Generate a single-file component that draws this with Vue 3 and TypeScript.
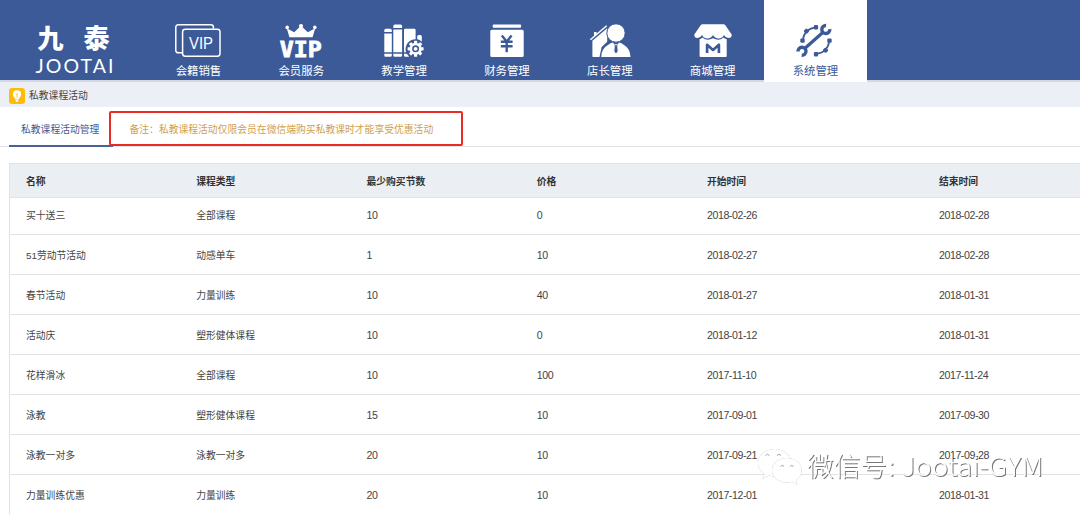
<script setup lang="ts">
interface NavItem {
  key: string
  label: string
}

interface Activity {
  name: string
  course: string
  minimum: number
  price: number
  start: string
  end: string
}

const navItems: NavItem[] = [
  { key: 'card', label: '会籍销售' },
  { key: 'member', label: '会员服务' },
  { key: 'teach', label: '教学管理' },
  { key: 'finance', label: '财务管理' },
  { key: 'manager', label: '店长管理' },
  { key: 'shop', label: '商城管理' },
  { key: 'system', label: '系统管理' },
]
const active = 'system'

const columns: string[] = ['名称', '课程类型', '最少购买节数', '价格', '开始时间', '结束时间']

const activities: Activity[] = [
  { name: '买十送三', course: '全部课程', minimum: 10, price: 0, start: '2018-02-26', end: '2018-02-28' },
  { name: '51劳动节活动', course: '动感单车', minimum: 1, price: 10, start: '2018-02-27', end: '2018-02-28' },
  { name: '春节活动', course: '力量训练', minimum: 10, price: 40, start: '2018-01-27', end: '2018-01-31' },
  { name: '活动庆', course: '塑形健体课程', minimum: 10, price: 0, start: '2018-01-12', end: '2018-01-31' },
  { name: '花样滑冰', course: '全部课程', minimum: 10, price: 100, start: '2017-11-10', end: '2017-11-24' },
  { name: '泳教', course: '塑形健体课程', minimum: 15, price: 10, start: '2017-09-01', end: '2017-09-30' },
  { name: '泳教一对多', course: '泳教一对多', minimum: 20, price: 10, start: '2017-09-21', end: '2017-09-28' },
  { name: '力量训练优惠', course: '力量训练', minimum: 20, price: 10, start: '2017-12-01', end: '2018-01-31' },
]

const teeth: number[] = [0, 45, 90, 135, 180, 225, 270, 315]
const systemTeeth: number[] = [-90, -45, 0, 90, 135, 180]
</script>

<template>
  <div class="page">
    <header class="header">
      <svg class="logo" viewBox="0 0 147 80">
        <text class="logo-cn" x="37.5" y="48" textLength="26" lengthAdjust="spacingAndGlyphs">九</text>
        <text class="logo-cn" x="83.5" y="48" textLength="26" lengthAdjust="spacingAndGlyphs">泰</text>
        <text class="logo-en" x="35.5" y="73" textLength="78">JOOTAI</text>
      </svg>
      <nav class="nav">
        <a v-for="item in navItems" :key="item.key" class="nav-item" :class="{ active: item.key === active }">
          <svg class="nav-icon" viewBox="0 0 48 36">
            <template v-if="item.key === 'card'">
              <path class="line" d="M8 30.8H4.2a2.4 2.4 0 0 1-2.4-2.4V5.2a2.4 2.4 0 0 1 2.4-2.4H37a2.4 2.4 0 0 1 2.4 2.4V6.5" />
              <rect class="line" x="8.6" y="7.2" width="37.4" height="27" rx="2.6" />
              <text class="vip-thin" x="15" y="26.6" textLength="24" lengthAdjust="spacingAndGlyphs">VIP</text>
            </template>
            <template v-else-if="item.key === 'member'">
              <path d="M12.4 15.2 9.8 6.2 17.2 10.2 24 3.8l6.8 6.4 7.4-4L35.6 15.2Z" />
              <circle cx="10.2" cy="5.4" r="1.8" />
              <circle cx="24" cy="4" r="2.1" />
              <circle cx="37.8" cy="5.4" r="1.8" />
              <text class="vip-bold" x="2.800" y="34.500" textLength="42" lengthAdjust="spacingAndGlyphs">VIP</text>
            </template>
            <template v-else-if="item.key === 'teach'">
              <path d="M4.3 10V8.2q0-1.5 1.5-1.5h4.5q1.5 0 1.5 1.5V10ZM4.3 11.5h7.5v18.7H4.3ZM4.3 31.7h7.5v1.8q0 1.3-1.3 1.3H5.6q-1.3 0-1.3-1.3Z" />
              <path d="M13.3 6V4q0-1.5 1.5-1.5h5.8q1.5 0 1.5 1.5v2ZM13.3 7.5h8.8v22.7h-8.8ZM13.3 31.7h8.8v1.8q0 1.3-1.3 1.3h-6.2q-1.3 0-1.3-1.3Z" />
              <path d="M24 8q0-1.3 1.3-1.3h9q1.3 0 1.3 1.3v9.2A10 10 0 0 0 26 30.2H24ZM24 31.7h2.8l2.4 3.1h-3.9q-1.3 0-1.3-1.3Z" />
              <path d="M37.2 17.3v-2.8q0-1.5 1.5-1.5h1.6q1.5 0 1.5 1.5v5.2q-2-2-4.6-2.4Z" />
              <circle class="ring" cx="35.6" cy="26.8" r="4.8" />
              <rect v-for="a in teeth" :key="a" x="34" y="18.8" width="3.2" height="3.2" rx=".6" :transform="`rotate(${a} 35.6 26.8)`" />
              <circle cx="35.6" cy="26.8" r="1.9" />
            </template>
            <template v-else-if="item.key === 'finance'">
              <rect x="9.7" y="2.5" width="28.4" height="3.2" rx="1" />
              <rect x="7.3" y="7.8" width="33.4" height="27.2" rx="1.6" />
              <path class="cut" d="m18.8 13.6 4.9 6 4.9-6M23.7 19.6v10.6M17.8 19.8h11.8M17.8 24.3h11.8" />
            </template>
            <template v-else-if="item.key === 'manager'">
              <path d="M6.400 18.700 21.200 6.200v13.6L15.600 25 13.500 35H7.200q-.8 0-.8-.8ZM8 10h2.600v2.700L8 15Z" />
              <path class="roof" d="M4.400 17.800 20.700 3.800" />
              <circle class="head" cx="30" cy="11" r="9.200" />
              <path d="M15.200 35q.1-8.600 7.500-12.600 2-1.100 3.700-1.800l2.300 1.600h2.600l2.300-1.600q1.800.6 3.700 1.800 7 4 7.200 12.600Z" />
              <path class="tie" d="m28.300 21.900 1.700 1.900 1.700-1.900-.5 2.400.5 4.900-1.700 2.300-1.700-2.300.5-4.900Z" />
            </template>
            <template v-else-if="item.key === 'shop'">
              <path d="M11.3 3.7q.5-1.5 2-1.5h21.400q1.500 0 2 1.500l6 8.700q.3 3.500-3.400 3.500-3 0-4.300-2.800-1.700 3.400-5.400 3.400-3.700 0-5.600-3.400-1.800 3.400-5.600 3.400-3.700 0-5.400-3.400-1.400 2.800-4.300 2.800-3.600 0-3.400-3.500Z" />
              <path d="M10.600 17.200q2-.7 2.900-1.800 4.200 4.100 10.500.9 6.400 3.200 10.500-.9 1 1.100 3.200 1.800V34q0 1-1 1H11.600q-1 0-1-1Z" />
              <path class="cut-m" d="M18.100 31V22.800l5.900 5.100 5.900-5.100V31" />
            </template>
            <template v-else>
              <path class="gear-line" d="M12 18.700A13 13 0 0 1 25 5.700M38 18.700A13 13 0 0 1 25 31.700" />
              <rect v-for="a in systemTeeth" :key="a" x="22.900" y="3" width="4.200" height="4.400" rx="1.200" :transform="`rotate(${a} 25 18.700)`" />
              <path class="wrench" d="M14 26.300 32 10.300" />
              <path class="jaw" d="M35.100 3.500A4 4 0 1 0 38.800 7.100" />
              <path class="jaw" d="M10.700 33.200A4 4 0 1 0 7 29.500" />
            </template>
          </svg>
          <span class="nav-label">{{ item.label }}</span>
        </a>
      </nav>
    </header>

    <div class="crumb">
      <svg class="bulb" viewBox="0 0 16 16">
        <rect class="bulb-bg" width="16" height="16" rx="3" />
        <path d="M8 2.3a4.1 4.1 0 0 0-4.1 4.1q0 2 1.9 3.5l.5 1.3h3.4l.5-1.3q1.9-1.5 1.9-3.5A4.1 4.1 0 0 0 8 2.3ZM6.6 11.8h2.8v1.3L8 14.2l-1.4-1.1Z" />
        <path class="bulb-mark" d="M7 5.5 8 7l1-1.5M8 7v3" />
      </svg>
      <span>私教课程活动</span>
    </div>

    <div class="tabs">
      <div class="tab">私教课程活动管理</div>
      <div class="note">备注：私教课程活动仅限会员在微信端购买私教课时才能享受优惠活动</div>
    </div>

    <div class="table">
      <div class="row head-row">
        <span v-for="column in columns" :key="column">{{ column }}</span>
      </div>
      <div v-for="activity in activities" :key="activity.name" class="row">
        <span>{{ activity.name }}</span>
        <span>{{ activity.course }}</span>
        <span class="num">{{ activity.minimum }}</span>
        <span class="num">{{ activity.price }}</span>
        <span class="num">{{ activity.start }}</span>
        <span class="num">{{ activity.end }}</span>
      </div>
    </div>

    <svg class="watermark" viewBox="0 0 300 50">
      <path class="bubble" d="M19 3C9.500 3 2 9.300 2 17c0 4.600 2.600 8.200 6.500 10.800L6.500 33l6.600-3.400q3 .9 6.500.9C29 30.500 35 24 35 17S28.500 3 19 3Z" />
      <path class="bubble" d="M31 12c-8.500 0-15 5.500-15 12.300S22.500 36.500 31 36.500q2.700 0 5.100-.7l5.300 2.900-1.400-4.500c3.500-2.300 5.700-5.800 5.700-9.900C45.700 17.500 39.500 12 31 12Z" />
      <path class="eyes" d="M9.500 9.500q2-2.500 4 0M21 9.500q2-2.500 4 0M24.500 20.500q1.800-2.300 3.600 0M34 20.500q1.800-2.300 3.600 0" />
      <text x="51" y="29.500" textLength="80" lengthAdjust="spacingAndGlyphs">微信号</text>
      <text x="132" y="29.500">:</text>
      <text x="145" y="29.500" textLength="142" lengthAdjust="spacingAndGlyphs">Jootai-GYM</text>
    </svg>
  </div>
</template>

<style>
body {
  margin: 0;
  overflow: hidden;
}
</style>

<style scoped>
.page {
  position: relative;
  width: 1080px;
  height: 514px;
  overflow: hidden;
  background: #fff;
  color: #444;
  font-family: "Liberation Sans", "Noto Sans CJK SC", sans-serif;
  font-size: 9.8px;
}
.header {
  display: flex;
  box-sizing: border-box;
  height: 82px;
  border-bottom: 2px solid #d3d7e1;
  background: #3c5a98;
}
.logo {
  width: 147px;
  height: 80px;
  fill: #fff;
}
.logo-cn {
  font: 900 26px "Noto Sans CJK SC", sans-serif;
}
.logo-en {
  font: 400 19.5px Lato, sans-serif;
}
.nav {
  display: flex;
}
.nav-item {
  display: flex;
  flex-direction: column;
  align-items: center;
  box-sizing: border-box;
  width: 102.85px;
  height: 82px;
  padding-top: 22px;
  color: #fff;
}
.nav-item.active {
  background: #fff;
  color: #3c5a98;
}
.nav-icon {
  width: 48px;
  height: 36px;
  fill: currentColor;
  overflow: visible;
}
.nav-label {
  margin-top: 5px;
  font-size: 11.4px;
  line-height: 17px;
}
.line {
  fill: none;
  stroke: currentColor;
  stroke-width: 1.5;
}
.vip-thin {
  font: 16.5px "Liberation Sans", sans-serif;
}
.vip-bold {
  font: 700 20.5px "DejaVu Sans Mono", monospace;
  stroke: currentColor;
  stroke-width: 0.8;
}
.ring {
  fill: none;
  stroke: currentColor;
  stroke-width: 2.6;
}
.cut {
  fill: none;
  stroke: #3c5a98;
  stroke-width: 2.4;
}
.cut-m {
  fill: none;
  stroke: #3c5a98;
  stroke-width: 2.7;
  stroke-linejoin: round;
}
.roof {
  stroke: currentColor;
  stroke-width: 1.5;
}
.head {
  stroke: #3c5a98;
  stroke-width: 1;
}
.tie {
  fill: #3c5a98;
}
.gear-line {
  fill: none;
  stroke: currentColor;
  stroke-width: 1.8;
}
.wrench {
  stroke: currentColor;
  stroke-width: 3.2;
}
.jaw {
  fill: none;
  stroke: currentColor;
  stroke-width: 3.4;
}
.crumb {
  display: flex;
  align-items: center;
  gap: 4px;
  height: 25px;
  padding-left: 9px;
  background: #ecf0f6;
}
.bulb {
  width: 16px;
  height: 16px;
  margin-top: 2px;
  fill: #fff;
}
.bulb-bg {
  fill: #fdbb0a;
}
.bulb-mark {
  fill: none;
  stroke: #fdbb0a;
  stroke-width: 0.8;
}
.tabs {
  display: flex;
  box-sizing: border-box;
  height: 40px;
  padding-left: 9px;
  border-bottom: 1px solid #dfe3e8;
}
.tab {
  box-sizing: border-box;
  width: 104px;
  height: 40px;
  margin-right: -4px;
  padding-left: 12px;
  border-bottom: 2px solid #496494;
  color: #3c5a98;
  line-height: 46px;
  white-space: nowrap;
}
.note {
  box-sizing: border-box;
  width: 354px;
  height: 35px;
  margin-top: 4px;
  padding-left: 18.5px;
  border: 2px solid #e92b25;
  border-radius: 2px;
  color: #d1a04d;
  line-height: 34px;
  white-space: nowrap;
}
.table {
  margin: 16px 0 0 9px;
  border-top: 1px solid #dfe3e8;
  border-left: 1px solid #dfe3e8;
}
.row {
  display: grid;
  grid-template-columns: 170.2px 170.3px 170.3px 170.2px 232px 1fr;
  align-items: center;
  box-sizing: border-box;
  height: 40px;
  padding-left: 16px;
  border-bottom: 1px solid #e1e2e4;
}
.num {
  font-size: 10.6px;
  letter-spacing: -0.42px;
}
.head-row {
  height: 34px;
  background: #ebeff4;
  color: #333;
  font-weight: 700;
}
.head-row + .row {
  height: 37px;
  padding-bottom: 3px;
}
.watermark {
  position: absolute;
  left: 756px;
  top: 446px;
  width: 300px;
  height: 50px;
  fill: #fff;
}
.bubble {
  filter: drop-shadow(0.6px 0.8px 0.4px #999);
}
.watermark text {
  font: 300 26px "Noto Sans CJK SC", sans-serif;
  filter: drop-shadow(1px 1px 0.5px #777);
}
.eyes {
  fill: none;
  stroke: #999;
  stroke-width: 0.9;
}
</style>
